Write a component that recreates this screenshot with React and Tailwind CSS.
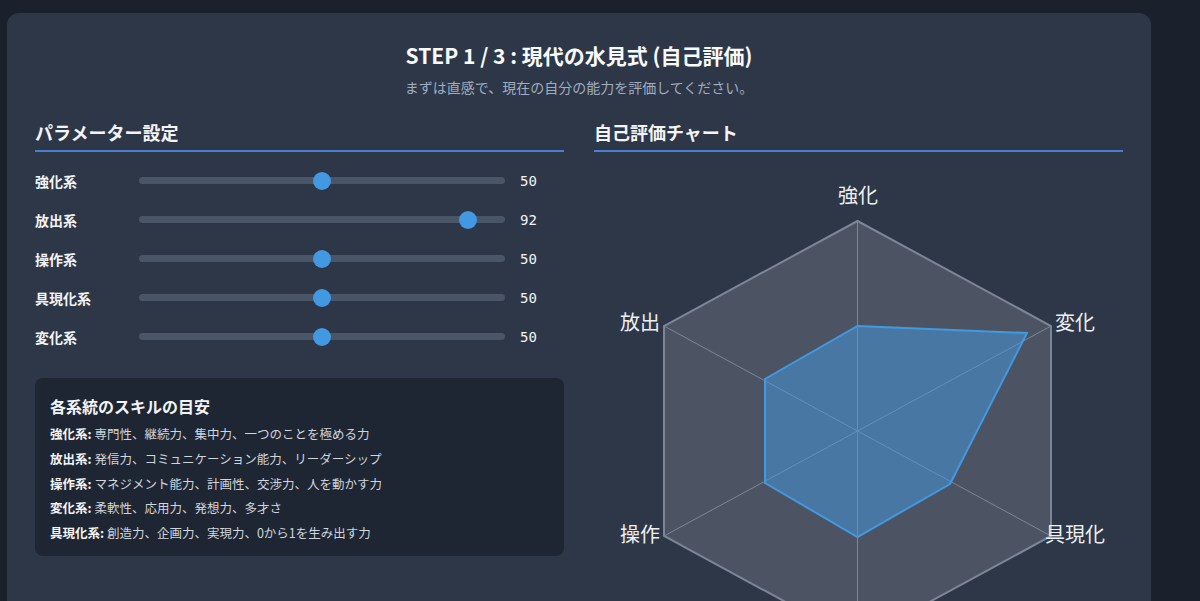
import React, { useState } from "react";

const FONT = { fontFamily: '"Noto Sans CJK JP", "Noto Sans", sans-serif' };
const MONO = { fontFamily: '"DejaVu Sans Mono", "Liberation Mono", monospace' };

const PARAMS = [
    { key: "kyoka", label: "強化系", value: 50 },
    { key: "hoshutsu", label: "放出系", value: 92 },
    { key: "sosa", label: "操作系", value: 50 },
    { key: "gugenka", label: "具現化系", value: 50 },
    { key: "henka", label: "変化系", value: 50 },
];

const GUIDE = [
    { name: "強化系", text: "専門性、継続力、集中力、一つのことを極める力" },
    { name: "放出系", text: "発信力、コミュニケーション能力、リーダーシップ" },
    { name: "操作系", text: "マネジメント能力、計画性、交渉力、人を動かす力" },
    { name: "変化系", text: "柔軟性、応用力、発想力、多才さ" },
    { name: "具現化系", text: "創造力、企画力、実現力、0から1を生み出す力" },
];

const Slider = ({ label, value, onChange }) => {
    // thumb is 18px wide, so its centre travels over (track - 18px)
    const pos = `calc(9px + (100% - 18px) * ${value / 100})`;
    return (
        <div className="flex items-center h-[39px]">
            <span className="w-[104px] text-sm font-bold text-gray-100">{label}</span>
            <div className="relative flex-1 h-[7px] rounded-full bg-[#4a5568]">
                <div
                    className="absolute top-1/2 w-[18px] h-[18px] -translate-x-1/2 -translate-y-1/2 rounded-full bg-[#4299e1]"
                    style={{ left: pos }}
                />
                <input
                    type="range"
                    min={0}
                    max={100}
                    value={value}
                    onChange={(e) => onChange(Number(e.target.value))}
                    className="absolute inset-0 w-full opacity-0 cursor-pointer"
                />
            </div>
            <span className="w-[59px] pl-[15px] text-sm text-gray-100" style={MONO}>
                {value}
            </span>
        </div>
    );
};

const RadarChart = () => {
    const cx = 263.5;
    const cy = 279;
    const outer = [
        [cx, 69],
        [457, 174],
        [457, 384],
        [cx, 489],
        [70, 384],
        [70, 174],
    ];
    const data = [
        [cx, 174],
        [433, 181],
        [356, 332],
        [cx, 385],
        [171, 331],
        [171, 227],
    ];
    const pts = (arr) => arr.map((p) => p.join(",")).join(" ");
    const labels = [
        { t: "強化", x: 264, y: 46, a: "middle" },
        { t: "変化", x: 461, y: 173, a: "start" },
        { t: "具現化", x: 451, y: 385, a: "start" },
        { t: "操作", x: 66, y: 385, a: "end" },
        { t: "放出", x: 66, y: 173, a: "end" },
    ];

    return (
        <svg width="529" height="460" viewBox="0 0 529 460" className="block overflow-visible">
            <polygon points={pts(outer)} fill="rgba(255,255,255,0.15)" stroke="#7d8696" strokeWidth="2" />
            {outer.map(([x, y], i) => (
                <line key={i} x1={cx} y1={cy} x2={x} y2={y} stroke="#7d8696" strokeWidth="1" />
            ))}
            <polygon
                points={pts(data)}
                fill="rgba(66,153,225,0.5)"
                stroke="#4299e1"
                strokeWidth="2"
                strokeLinejoin="miter"
            />
            {labels.map((l) => (
                <text
                    key={l.t}
                    x={l.x}
                    y={l.y}
                    textAnchor={l.a}
                    dominantBaseline="middle"
                    fill="#eef0f3"
                    fontSize="20"
                    style={{ fontFamily: '"Noto Sans CJK JP", sans-serif' }}
                >
                    {l.t}
                </text>
            ))}
        </svg>
    );
};

const App = () => {
    const [values, setValues] = useState(
        Object.fromEntries(PARAMS.map((p) => [p.key, p.value]))
    );

    return (
        <div className="min-h-screen bg-[#1a202c] pt-[13px] pl-[7px]" style={FONT}>
            <div className="w-[1144px] rounded-xl bg-[#2d3748] p-7">
                {/* ── Header ── */}
                <div className="text-center">
                    <h1 className="text-[21px] font-bold text-gray-50 leading-7 mb-2">
                        STEP 1 / 3 : 現代の水見式 (自己評価)
                    </h1>
                    <p className="text-sm leading-5 text-[#a0aec0]">
                        まずは直感で、現在の自分の能力を評価してください。
                    </p>
                </div>

                <div className="grid grid-cols-2 gap-[30px] mt-[21px]">
                    {/* ── Left: sliders ── */}
                    <div>
                        <h2 className="text-lg font-bold text-gray-100 leading-7 pb-1 border-b-2 border-[#4a7ecf]">
                            パラメーター設定
                        </h2>
                        <div className="mt-[9px]">
                            {PARAMS.map((p) => (
                                <Slider
                                    key={p.key}
                                    label={p.label}
                                    value={values[p.key]}
                                    onChange={(v) => setValues({ ...values, [p.key]: v })}
                                />
                            ))}
                        </div>

                        <div className="mt-[22px] rounded-lg bg-[#1e2634] px-[15px] pt-4 pb-[10px]">
                            <h3 className="text-base font-bold text-gray-100 leading-6 mb-1">
                                各系統のスキルの目安
                            </h3>
                            {GUIDE.map((g) => (
                                <p key={g.name} className="text-[12.5px] leading-[24.75px] text-gray-300">
                                    <span className="font-bold text-gray-100">{g.name}:</span> {g.text}
                                </p>
                            ))}
                        </div>
                    </div>

                    {/* ── Right: chart ── */}
                    <div>
                        <h2 className="text-lg font-bold text-gray-100 leading-7 pb-1 border-b-2 border-[#4a7ecf]">
                            自己評価チャート
                        </h2>
                        <RadarChart />
                    </div>
                </div>
            </div>
        </div>
    );
};

export default App;
